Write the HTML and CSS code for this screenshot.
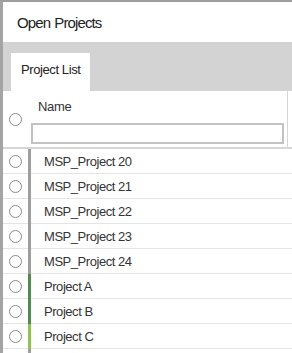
FILE: index.html
```html
<!DOCTYPE html>
<html>
<head>
<meta charset="utf-8">
<link rel="stylesheet" href="styles.css">
</head>
<body>
<div class="window">
  <div class="titlebar">Open Projects</div>
  <div class="tabband">
    <div class="tab">Project List</div>
  </div>
  <div class="thead">
    <div class="radio-cell"><span class="radio"></span></div>
    <div class="name-cell">
      <div class="name-label">Name</div>
      <input class="filter" type="text">
    </div>
  </div>
  <div class="rows">
    <div class="row"><div class="radio-cell"><span class="radio"></span></div><div class="bar gray"></div><div class="label">MSP_Project 20</div></div>
    <div class="row"><div class="radio-cell"><span class="radio"></span></div><div class="bar gray"></div><div class="label">MSP_Project 21</div></div>
    <div class="row"><div class="radio-cell"><span class="radio"></span></div><div class="bar gray"></div><div class="label">MSP_Project 22</div></div>
    <div class="row"><div class="radio-cell"><span class="radio"></span></div><div class="bar gray"></div><div class="label">MSP_Project 23</div></div>
    <div class="row"><div class="radio-cell"><span class="radio"></span></div><div class="bar gray"></div><div class="label">MSP_Project 24</div></div>
    <div class="row"><div class="radio-cell"><span class="radio"></span></div><div class="bar green"></div><div class="label">Project A</div></div>
    <div class="row"><div class="radio-cell"><span class="radio"></span></div><div class="bar green"></div><div class="label">Project B</div></div>
    <div class="row"><div class="radio-cell"><span class="radio"></span></div><div class="bar lime"></div><div class="label">Project C</div></div>
    <div class="row"><div class="radio-cell"><span class="radio"></span></div><div class="bar gray"></div><div class="label"></div></div>
  </div>
</div>
</body>
</html>
```
FILE: styles.css
```css
html, body {
  margin: 0;
  padding: 0;
  background: #fff;
}
body {
  width: 292px;
  height: 353px;
  overflow: hidden;
  font-family: "Liberation Sans", Arial, sans-serif;
  color: #333;
}
.window {
  border-top: 2px solid #9c9c9c;
  border-left: 3px solid #a4a4a4;
  height: 353px;
  box-sizing: border-box;
  overflow: hidden;
}
.titlebar {
  height: 40px;
  display: flex;
  align-items: center;
  padding-left: 14px;
  font-size: 15px;
  letter-spacing: -0.9px;
  word-spacing: 1px;
  color: #222;
}
.tabband {
  height: 49px;
  background: #d3d3d3;
  box-sizing: border-box;
  padding: 11px 0 0 8px;
}
.tab {
  width: 79px;
  height: 38px;
  background: #fff;
  box-sizing: border-box;
  padding: 9px 0 0 10px;
  font-size: 13px;
  letter-spacing: -0.4px;
  color: #222;
}
.thead {
  display: flex;
  height: 58px;
  border-bottom: 2px solid #d6d6d6;
  box-sizing: border-box;
}
.thead .radio-cell {
  width: 25px;
  display: flex;
  justify-content: center;
  align-items: flex-start;
  padding-top: 22px;
  box-sizing: border-box;
}
.name-cell {
  width: 260px;
  border-right: 1px solid #d6d6d6;
  box-sizing: border-box;
  padding: 9px 0 0 3px;
  height: 56px;
}
.name-label {
  font-size: 13px;
  letter-spacing: -0.3px;
  padding-left: 7px;
  height: 23px;
  line-height: 13px;
  color: #333;
}
.filter {
  display: block;
  margin: 0;
  width: 253px;
  height: 21px;
  box-sizing: border-box;
  border: 2px solid #c2c2c2;
  background: #fff;
  padding: 0;
  outline: none;
}
.radio {
  display: block;
  width: 11px;
  height: 11px;
  border: 1px solid #8a8a8a;
  border-radius: 50%;
  background: #fff;
}
.rows {
  height: 204px;
  overflow: hidden;
}
.row {
  display: flex;
  height: 25px;
  border-bottom: 1px solid #e4e4e4;
  box-sizing: border-box;
}
.row .radio-cell {
  width: 25px;
  display: flex;
  justify-content: center;
  align-items: center;
}
.bar {
  width: 3px;
  height: 25px;
}
.bar.gray { background: #9e9e9e; }
.bar.green { background: #538a53; }
.bar.lime { background: #92c352; }
.label {
  padding-left: 13px;
  display: flex;
  align-items: center;
  font-size: 13px;
  letter-spacing: -0.45px;
  color: #333;
}
```
